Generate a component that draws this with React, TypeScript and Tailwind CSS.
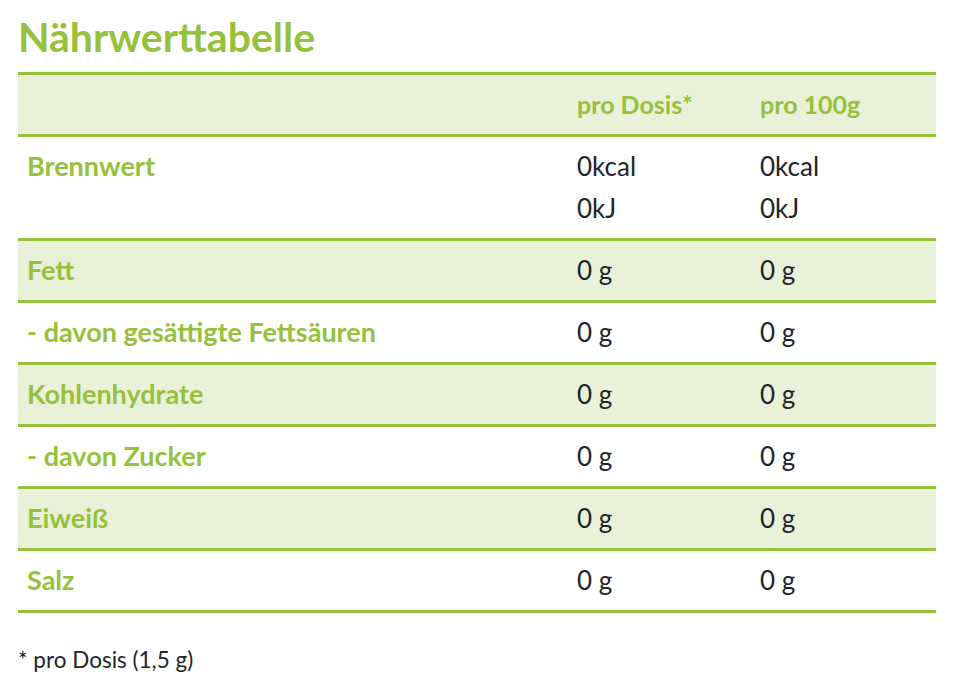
const green = 'text-[#95c13c]';

type Row = { label: string; dose: string[]; per100: string[] };

const rows: Row[] = [
  { label: 'Brennwert', dose: ['0kcal', '0kJ'], per100: ['0kcal', '0kJ'] },
  { label: 'Fett', dose: ['0 g'], per100: ['0 g'] },
  { label: '- davon gesättigte Fettsäuren', dose: ['0 g'], per100: ['0 g'] },
  { label: 'Kohlenhydrate', dose: ['0 g'], per100: ['0 g'] },
  { label: '- davon Zucker', dose: ['0 g'], per100: ['0 g'] },
  { label: 'Eiweiß', dose: ['0 g'], per100: ['0 g'] },
  { label: 'Salz', dose: ['0 g'], per100: ['0 g'] },
];

function Cell({ lines }: { lines: string[] }) {
  return (
    <div className="flex flex-col gap-[6px] px-[9px] pt-[11px] pb-[12px] text-[26px]">
      {lines.map((l) => (
        <span key={l} className="leading-[36px]">
          {l}
        </span>
      ))}
    </div>
  );
}

export default function App() {
  return (
    <div className="min-h-screen bg-white px-[18px] pt-[13px] text-[#212529] [font-family:Lato,'Liberation_Sans',sans-serif]">
      <h1 className={`${green} text-[41px] font-bold leading-[48px]`}>Nährwerttabelle</h1>

      <div className="mt-[11px] w-[918px] border-t-[3px] border-[#95c13c]">
        <div className="grid h-[62px] grid-cols-[550px_183px_1fr] items-center border-b-[3px] border-[#95c13c] bg-[#e9f2d8] text-[25px]">
          <div />
          <div className={`${green} px-[9px] font-bold`}>pro Dosis*</div>
          <div className={`${green} px-[9px] font-bold`}>pro 100g</div>
        </div>

        {rows.map((r, i) => (
          <div
            key={r.label}
            className={`grid grid-cols-[550px_183px_1fr] border-b-[3px] border-[#95c13c] ${
              i % 2 === 1 ? 'bg-[#e9f2d8]' : 'bg-white'
            }`}
          >
            <div className={`${green} px-[9px] pt-[11px] pb-[12px] text-[27px] font-bold leading-[36px]`}>
              {r.label}
            </div>
            <Cell lines={r.dose} />
            <Cell lines={r.per100} />
          </div>
        ))}
      </div>

      <p className="mt-[32px] text-[22.5px] leading-[30px]">* pro Dosis (1,5 g)</p>
    </div>
  );
}
